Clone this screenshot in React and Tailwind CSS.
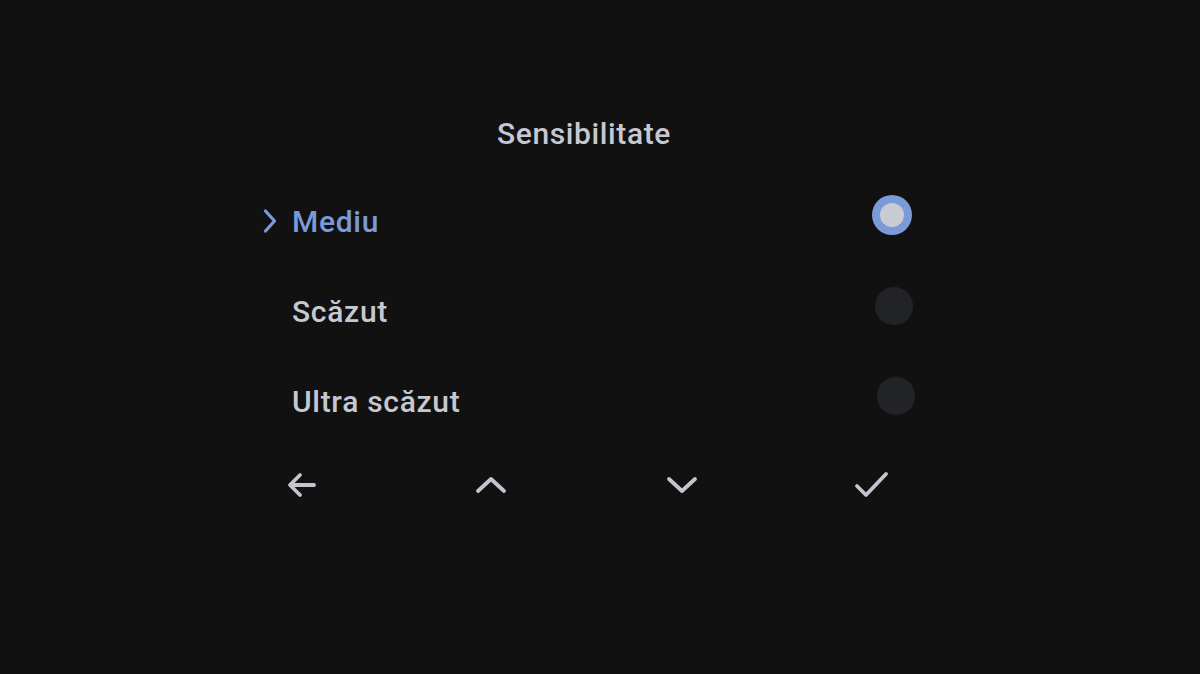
import React from "react";

const options = [
  { label: "Mediu", selected: true, shift: "mr-[2px]" },
  { label: "Scăzut", selected: false, shift: "mr-[1px]" },
  { label: "Ultra scăzut", selected: false, shift: "-mr-[1px]" },
];

const Chevron = () => (
  <svg width="17" height="24" viewBox="0 0 17 24" fill="none" stroke="#7b9ad8" strokeWidth="3.2" strokeLinecap="round" strokeLinejoin="round">
    <path d="M3.5 2l9 10-9 10" />
  </svg>
);

const Radio = ({ selected }) =>
  selected ? (
    <div className="w-[40px] h-[40px] rounded-full bg-[#7b9ad8] flex items-center justify-center">
      <div className="w-[24px] h-[24px] rounded-full bg-[#c9cbd3]" />
    </div>
  ) : (
    <div className="w-[38px] h-[38px] rounded-full bg-[#222326]" />
  );

const Icon = ({ children }) => (
  <svg width="36" height="36" viewBox="0 0 36 36" fill="none" stroke="#c3c5cf" strokeWidth="3.8" strokeLinecap="round" strokeLinejoin="round">
    {children}
  </svg>
);

export default function App() {
  return (
    <div
      className="w-[1200px] h-[674px] bg-[#111112] flex justify-center overflow-hidden"
      style={{ fontFamily: "Roboto, 'Noto Sans', sans-serif" }}
    >
      <div className="w-[652px] ml-[-24px] pt-[115px] flex flex-col">
        <div className="h-[36px] flex items-center justify-center text-[30px] font-medium tracking-[0.6px] text-[#c6c8d1] mr-[8px]">
          Sensibilitate
        </div>
        <div className="mt-[25px] flex flex-col">
          {options.map((o) => (
            <div key={o.label} className="h-[90px] flex items-center">
              <div className="w-[30px] flex items-center">
                {o.selected && <Chevron />}
              </div>
              <div
                className={`text-[30px] font-medium tracking-[0.7px] ${
                  o.selected ? "text-[#7b9ad8]" : "text-[#c6c8d1]"
                }`}
              >
                {o.label}
              </div>
              <div className={`ml-auto ${o.shift} ${o.selected ? "-mt-[12px]" : "-mt-[10px]"}`}>
                <Radio selected={o.selected} />
              </div>
            </div>
          ))}
        </div>
        <div className="mt-[21px] flex justify-between pl-[21px] pr-[24px]">
          <Icon>
            <path d="M31 18H8M17 8L7 18l10 10" />
          </Icon>
          <Icon>
            <path d="M5 24l13-12 13 12" />
          </Icon>
          <Icon>
            <path d="M5 12l13 12 13-12" />
          </Icon>
          <Icon>
            <path d="M3 19l9 9 20-21" />
          </Icon>
        </div>
      </div>
    </div>
  );
}
